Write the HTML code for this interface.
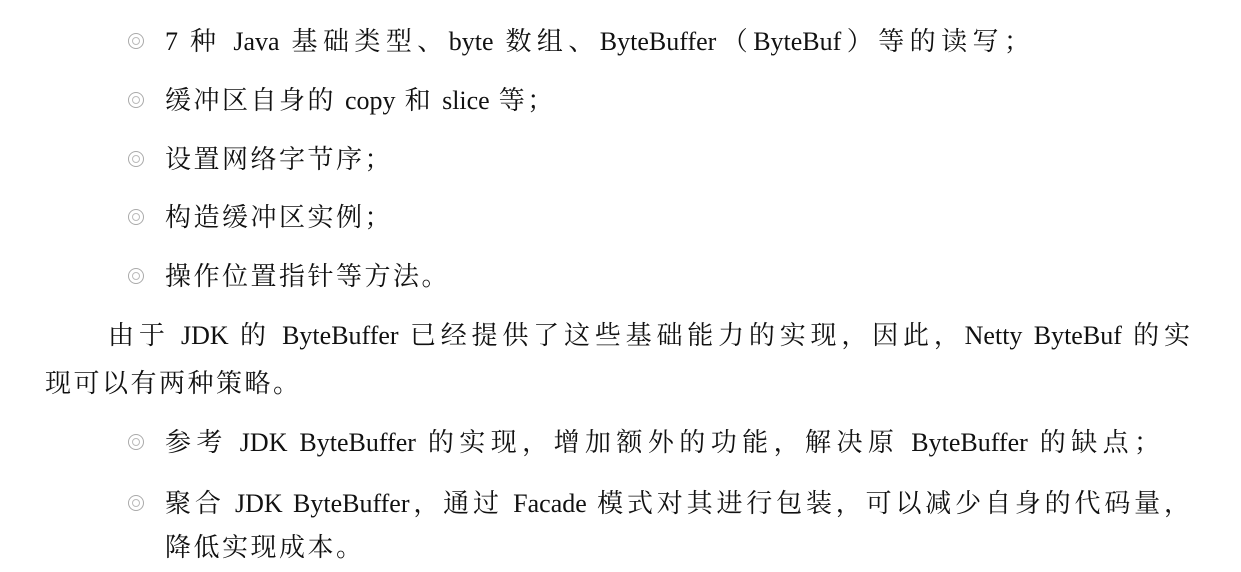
<!DOCTYPE html>
<html><head><meta charset="utf-8"><style>
html,body{margin:0;padding:0;background:#fff;}
body{width:1241px;height:572px;position:relative;overflow:hidden;
font-family:"Liberation Serif","Noto Serif CJK SC",serif;font-size:26px;color:#111;}
.l{position:absolute;white-space:nowrap;line-height:30px;}
.c{letter-spacing:2.5px;}
.n{letter-spacing:0;}
.b{position:absolute;left:128px;width:14px;height:14px;border:1.5px solid #aaa;border-radius:50%;}
.b::after{content:"";position:absolute;left:3px;top:3px;width:6px;height:6px;border:1px solid #bbb;border-radius:50%;}
.j{text-align:justify;text-align-last:justify;}
</style></head><body>
<div class="b" style="top:33px"></div>
<div class="l j" style="left:165px;top:27px;width:865px">7 种 Java 基础类型、byte 数组、ByteBuffer（ByteBuf）等的读写；</div>
<div class="b" style="top:92px"></div>
<div class="l c" style="left:165px;top:86px">缓冲区自身的 <span class="n">copy</span> 和 <span class="n">slice</span> 等；</div>
<div class="b" style="top:151px"></div>
<div class="l c" style="left:165px;top:145px">设置网络字节序；</div>
<div class="b" style="top:209px"></div>
<div class="l c" style="left:165px;top:203px">构造缓冲区实例；</div>
<div class="b" style="top:268px"></div>
<div class="l c" style="left:165px;top:262px">操作位置指针等方法。</div>
<div class="l j" style="left:108px;top:321px;width:1082px">由于 JDK 的 ByteBuffer 已经提供了这些基础能力的实现，因此，Netty ByteBuf 的实</div>
<div class="l c" style="left:45px;top:369px">现可以有两种策略。</div>
<div class="b" style="top:434px"></div>
<div class="l j" style="left:165px;top:428px;width:995px">参考 JDK ByteBuffer 的实现，增加额外的功能，解决原 ByteBuffer 的缺点；</div>
<div class="b" style="top:495px"></div>
<div class="l j" style="left:165px;top:489px;width:1025px">聚合 JDK ByteBuffer，通过 Facade 模式对其进行包装，可以减少自身的代码量，</div>
<div class="l c" style="left:165px;top:533px">降低实现成本。</div>
</body></html>
